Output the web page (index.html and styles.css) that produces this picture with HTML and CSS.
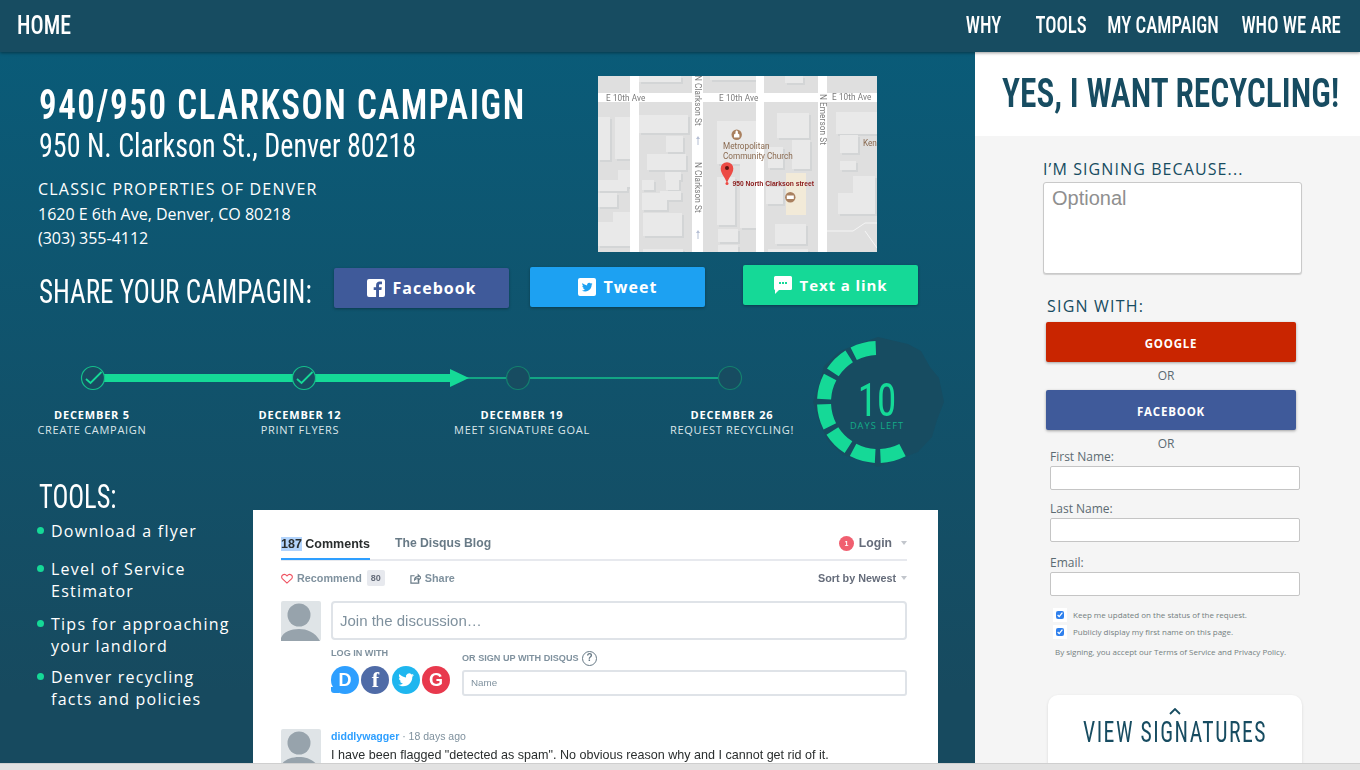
FILE: index.html
```html
<!DOCTYPE html>
<html lang="en">
<head>
<meta charset="utf-8">
<title>940/950 Clarkson Campaign</title>
<link rel="stylesheet" href="styles.css">
</head>
<body>
<header class="topbar">
  <a class="home">HOME</a>
  <nav class="nav">
    <a class="nav-why">WHY</a>
    <a class="nav-tools">TOOLS</a>
    <a class="nav-camp">MY CAMPAIGN</a>
    <a>WHO WE ARE</a>
  </nav>
</header>
<div class="page">
  <main class="left">
    <section class="hero">
      <div class="hero-text">
        <h1>940/950 CLARKSON CAMPAIGN</h1>
        <h2>950 N. Clarkson St., Denver 80218</h2>
        <p class="owner">CLASSIC PROPERTIES OF DENVER</p>
        <p class="addr">1620 E 6th Ave, Denver, CO 80218</p>
        <p class="addr">(303) 355-4112</p>
      </div>
      <svg class="map" viewBox="0 0 279 176" width="279" height="176">
        <defs>
          <g id="blds">
            <rect x="41" y="39" width="49" height="18"/><rect x="0" y="41" width="12" height="43"/><rect x="17" y="41" width="20" height="42"/><rect x="68" y="60" width="17" height="16"/><rect x="49" y="78" width="39" height="16"/><rect x="20" y="94" width="19" height="17"/><rect x="0" y="104" width="29" height="11"/><rect x="44" y="104" width="12" height="10"/><rect x="67" y="96" width="16" height="8"/><rect x="68" y="104" width="13" height="10"/><rect x="62" y="115" width="21" height="9"/><rect x="44" y="117" width="25" height="17"/><rect x="0" y="117" width="19" height="14"/><rect x="15" y="136" width="22" height="22"/><rect x="0" y="146" width="37" height="10"/><rect x="0" y="156" width="37" height="14"/><rect x="45" y="137" width="39" height="23"/><rect x="119" y="45" width="43" height="43"/><rect x="119" y="101" width="18" height="48"/><rect x="142" y="87" width="16" height="65"/><rect x="120" y="153" width="20" height="13"/><rect x="120" y="169" width="20" height="7"/><rect x="179" y="37" width="32" height="25"/><rect x="194" y="64" width="18" height="29"/><rect x="170" y="71" width="15" height="21"/><rect x="168" y="111" width="17" height="17"/><rect x="177" y="148" width="31" height="20"/><rect x="238" y="36" width="41" height="22"/><rect x="242" y="59" width="18" height="18"/><rect x="242" y="85" width="16" height="9"/><rect x="255" y="100" width="22" height="19"/><rect x="240" y="117" width="37" height="21"/><rect x="41" y="0" width="42" height="6"/><rect x="112" y="0" width="46" height="4"/><rect x="187" y="0" width="18" height="7"/><rect x="45" y="173" width="40" height="3"/><rect x="170" y="173" width="40" height="3"/>
          </g>
        </defs>
        <rect class="m-ground" width="279" height="176"/>
        <use href="#blds" x="2" y="2" class="m-shadow"/>
        <use href="#blds" class="m-bld"/>
        <rect class="m-tan" x="188" y="97" width="20" height="42"/>
        <path class="m-path" d="M229 155 L255 155 L267 147 L279 147 M267 155 L279 172"/>
        <rect class="m-road" x="0" y="17" width="279" height="9"/>
        <rect class="m-road" x="32" y="0" width="9" height="176"/>
        <rect class="m-road" x="94" y="0" width="11" height="176"/>
        <rect class="m-road" x="158" y="0" width="8" height="176"/>
        <rect class="m-road" x="220" y="0" width="9" height="176"/>
        <text class="m-lbl" x="8" y="25">E 10th Ave</text>
        <text class="m-lbl" x="121" y="25">E 10th Ave</text>
        <text class="m-lbl" x="234" y="24">E 10th Ave</text>
        <text class="m-lbl" transform="translate(97 -1) rotate(90)">N Clarkson St</text>
        <text class="m-lbl" transform="translate(97 86) rotate(90)">N Clarkson St</text>
        <text class="m-lbl" transform="translate(222 18) rotate(90)">N Emerson St</text>
        <path class="m-arrow" d="M99.500 69v-6h-1.500l2-3 2 3h-1.500v6zM99.500 163v-6h-1.500l2-3 2 3h-1.500v6z"/>
        <circle class="m-poi" cx="138.700" cy="58.700" r="5.200"/>
        <path class="m-poi-g" d="M136 61.500v-3l1.500-1v-2l1.200-1.200 1.200 1.200v2l1.500 1v3z"/>
        <circle class="m-poi" cx="192.300" cy="121.300" r="5.200"/>
        <rect class="m-poi-g" x="188.800" y="119.500" width="7" height="3.500"/>
        <text class="m-church" x="125" y="73">Metropolitan</text>
        <text class="m-church" x="125" y="83">Community Church</text>
        <text class="m-church" x="265" y="70">Ken</text>
        <path class="m-pin" d="M129 108c-.8-6-6.300-9.500-6.300-15.500a6.300 6.300 0 0 1 12.600 0c0 6-5.500 9.500-6.300 15.500z"/>
        <circle class="m-pin-dot" cx="129" cy="92" r="2"/>
        <circle class="m-pin" cx="129" cy="107.500" r="1.500"/>
        <text class="m-pin-lbl" x="134.500" y="110">950 North Clarkson street</text>
      </svg>
    </section>

    <section class="share">
      <h3 class="share-title">SHARE YOUR CAMPAGIN:</h3>
      <a class="btn btn-fb">
        <svg class="btn-ic" viewBox="0 0 18 18" width="18" height="18"><path class="ic-w" d="M2 0h14a2 2 0 0 1 2 2v14a2 2 0 0 1-2 2h-4v-7h2.400l.4-2.800H12V6.500c0-.8.300-1.300 1.400-1.300H15V2.700c-.3 0-1.200-.1-2.200-.1-2.200 0-3.700 1.300-3.700 3.700v1.900H6.700V11h2.400v7H2a2 2 0 0 1-2-2V2a2 2 0 0 1 2-2z"/></svg>
        Facebook
      </a>
      <a class="btn btn-tw">
        <svg class="btn-ic" viewBox="0 0 18 18" width="18" height="18"><path class="ic-w" fill-rule="evenodd" d="M2 0h14a2 2 0 0 1 2 2v14a2 2 0 0 1-2 2H2a2 2 0 0 1-2-2V2a2 2 0 0 1 2-2zM14.500 5.800c-.4.200-.8.300-1.200.3.400-.3.800-.7.900-1.200-.4.300-.9.400-1.400.5a2.200 2.200 0 0 0-3.700 2c-1.800-.1-3.400-1-4.500-2.300-.6 1-.3 2.200.7 2.900-.4 0-.7-.1-1-.3 0 1.100.8 2 1.800 2.200-.3.100-.7.100-1 0 .3.900 1.100 1.500 2.100 1.500-1 .8-2.200 1.100-3.300 1 1 .6 2.100 1 3.400 1 4.100 0 6.500-3.500 6.300-6.600.4-.3.700-.6.900-1z"/></svg>
        Tweet
      </a>
      <a class="btn btn-tx">
        <svg class="btn-ic" viewBox="0 0 18 18" width="18" height="18"><path class="ic-w" fill-rule="evenodd" d="M1.500 0h15A1.500 1.500 0 0 1 18 1.500v11a1.500 1.500 0 0 1-1.500 1.500H5l-4 4v-4h.5A1.500 1.500 0 0 1 0 12.500v-11A1.500 1.500 0 0 1 1.500 0zM5 6v2h2V6zm3 0v2h2V6zm3 0v2h2V6z"/></svg>
        Text a link
      </a>
    </section>

    <section class="progress">
      <div class="timeline">
        <svg class="track" viewBox="0 0 836 36" width="836" height="36">
          <line class="t-thin" x1="450" y1="18" x2="730" y2="18"/>
          <path class="t-thick" d="M93 14H450V9L469 18 450 27V22H93z"/>
          <circle class="t-node" cx="93" cy="18" r="11.500"/>
          <circle class="t-node" cx="304" cy="18" r="11.500"/>
          <circle class="t-node t-off" cx="518" cy="18" r="11.500"/>
          <circle class="t-node t-off" cx="730" cy="18" r="11.500"/>
          <path class="t-check" d="M86 19l4.500 4 11-11"/>
          <path class="t-check" d="M297 19l4.500 4 11-11"/>
        </svg>
        <div class="steps">
          <div class="step"><b>DECEMBER 5</b><span>CREATE CAMPAIGN</span></div>
          <div class="step"><b>DECEMBER 12</b><span>PRINT FLYERS</span></div>
          <div class="step"><b>DECEMBER 19</b><span>MEET SIGNATURE GOAL</span></div>
          <div class="step"><b>DECEMBER 26</b><span>REQUEST RECYCLING!</span></div>
        </div>
      </div>
      <div class="countdown">
        <svg class="cd-ring" viewBox="0 0 134 134" width="134" height="134">
          <polygon class="cd-bg" points="66,1 83,5 96,8 109,15 118,31 127,42 132,66 125,84 120,101 106,116 90,122 66,131 48,124 31,119 16,105 8,88 1,66 7,48 12,30 28,15 46,8"/>
          <circle class="cd-dash" cx="66" cy="66" r="54" transform="rotate(63 66 66)"/>
        </svg>
        <div class="cd-text"><strong>10</strong><span>DAYS LEFT</span></div>
      </div>
    </section>

    <section class="bottom">
      <aside class="tools">
        <h3 class="tools-title">TOOLS:</h3>
        <ul class="tools-list">
          <li>Download a flyer</li>
          <li>Level of Service Estimator</li>
          <li>Tips for approaching your landlord</li>
          <li>Denver recycling facts and policies</li>
        </ul>
      </aside>
      <div class="disqus">
        <div class="dq-tabs">
          <span class="dq-tab-on"><mark>187</mark> Comments</span>
          <span class="dq-tab">The Disqus Blog</span>
          <span class="dq-login">
            <span class="dq-badge">1</span>Login<i class="dq-caret"></i>
          </span>
        </div>
        <div class="dq-actions">
          <svg class="dq-heart" viewBox="0 0 14 12" width="12" height="11"><path d="M7 11.300 1.500 6.200C-1 3 3.500-1 7 3c3.500-4 8 0 5.500 3.200z"/></svg>
          <span>Recommend</span><span class="dq-count">80</span>
          <svg class="dq-share" viewBox="0 0 12 12" width="11" height="11"><path d="M9.500 7.500V11H1V3h4M5 7.500C5 5 7 4 9 4V2l3 3-3 3V6C7.500 6 6 6.500 5 7.500z"/></svg>
          <span>Share</span>
          <span class="dq-sort">Sort by Newest<i class="dq-caret"></i></span>
        </div>
        <div class="dq-post">
          <svg class="dq-ava" viewBox="0 0 40 40" width="40" height="40"><rect class="ava-bg" width="40" height="40" rx="2"/><circle class="ava-fg" cx="18" cy="14" r="11.500"/><path class="ava-fg" d="M0 40v-3c2-6 10-9 18-9s16 3 21 12z"/></svg>
          <div class="dq-input">Join the discussion…</div>
        </div>
        <div class="dq-auth">
          <div class="dq-login-with">
            <div class="dq-small">LOG IN WITH</div>
            <div class="dq-socials">
              <span class="soc soc-d">D</span>
              <span class="soc soc-f">f</span>
              <span class="soc soc-t"><svg viewBox="0 0 18 18" width="18" height="18"><path class="ic-w" d="M17 4c-.6.300-1.200.4-1.900.5.700-.4 1.200-1 1.400-1.800-.6.400-1.300.6-2 .8a3.200 3.200 0 0 0-5.500 2.900C6.300 6.300 4 5 2.400 3.100c-.9 1.500-.4 3.300 1 4.300-.5 0-1-.2-1.500-.4 0 1.600 1.100 2.900 2.600 3.200-.5.100-1 .1-1.500 0 .4 1.300 1.600 2.200 3 2.200-1.400 1.100-3.100 1.600-4.800 1.400 1.500.9 3.100 1.500 4.900 1.500 6 0 9.400-5 9.200-9.500.6-.5 1.200-1.100 1.700-1.800z"/></svg></span>
              <span class="soc soc-g">G</span>
            </div>
          </div>
          <div class="dq-signup">
            <div class="dq-small dq-small-q">OR SIGN UP WITH DISQUS <span class="dq-q">?</span></div>
            <div class="dq-name">Name</div>
          </div>
        </div>
        <div class="dq-comment">
          <svg class="dq-ava" viewBox="0 0 40 40" width="40" height="40"><rect class="ava-bg" width="40" height="40" rx="2"/><circle class="ava-fg" cx="18" cy="14" r="11.500"/><path class="ava-fg" d="M0 40v-3c2-6 10-9 18-9s16 3 21 12z"/></svg>
          <div class="dq-body">
            <div class="dq-meta"><b>diddlywagger</b> · 18 days ago</div>
            <div class="dq-msg">I have been flagged "detected as spam". No obvious reason why and I cannot get rid of it.</div>
          </div>
        </div>
      </div>
    </section>
  </main>

  <aside class="right">
    <div class="yes"><h2>YES, I WANT RECYCLING!</h2></div>
    <form class="sign">
      <label class="because">I’M SIGNING BECAUSE...</label>
      <textarea class="reason" placeholder="Optional"></textarea>
      <h4 class="signwith">SIGN WITH:</h4>
      <a class="sbtn sbtn-g">GOOGLE</a>
      <div class="or">OR</div>
      <a class="sbtn sbtn-f">FACEBOOK</a>
      <div class="or or-2">OR</div>
      <label class="fld fld-1">First Name:</label>
      <input class="inp" type="text">
      <label class="fld">Last Name:</label>
      <input class="inp" type="text">
      <label class="fld fld-3">Email:</label>
      <input class="inp" type="text">
      <label class="chk chk-1"><input type="checkbox" checked>Keep me updated on the status of the request.</label>
      <label class="chk chk-2"><input type="checkbox" checked>Publicly display my first name on this page.</label>
      <p class="terms">By signing, you accept our Terms of Service and Privacy Policy.</p>
      <div class="view">
        <svg class="view-caret" viewBox="0 0 12 7" width="12" height="7"><path d="M1 6l5-5 5 5"/></svg>
        <div class="view-txt">VIEW SIGNATURES</div>
      </div>
    </form>
  </aside>
</div>
<div class="scrollbar"></div>
</body>
</html>
```

FILE: styles.css
```css
* { box-sizing: border-box; }
html, body { margin: 0; height: 770px; overflow: hidden; }
body {
  display: flex; flex-direction: column; width: 1360px;
  font-family: "Open Sans", sans-serif; background: #e2e2e2;
}
h1, h2, h3, h4, p { margin: 0; font-weight: 400; }

/* top bar */
.topbar {
  height: 52px; flex: none; display: flex; justify-content: space-between; align-items: center;
  background: #174c61; color: #fff; padding: 0 19px 2px 17px;
  box-shadow: 0 1px 3px rgba(0,0,0,.4); position: relative; z-index: 2;
  font-family: "Roboto", sans-serif; font-stretch: 75%; font-weight: 500;
}
.home { font-size: 26px; transform: scaleX(.84); transform-origin: left center; }
.nav { display: flex; font-size: 24px; gap: 29px; transform: scaleX(.78); transform-origin: right center; }
.nav-why { margin-right: 15px; }
.nav-tools { margin-right: -2.500px; }

.page { flex: 1; display: flex; min-height: 0; border-bottom: 1px solid #cfcfcf; }

/* left */
.left {
  width: 975px; flex: none; overflow: hidden; color: #fff;
  background: linear-gradient(#0a5b78, #174a5f 90%);
}
.hero { display: flex; padding: 24px 0 0 39px; height: 200px; }
.hero-text { width: 559px; padding-top: 7px; }
h1 {
  font-family: "Roboto", sans-serif; font-stretch: 75%;
  font-size: 42px; font-weight: 600; letter-spacing: 1.900px; line-height: 44px; white-space: nowrap;
  transform: scaleX(.833); transform-origin: left center;
}
.hero-text h2 {
  font-family: "Roboto", sans-serif; font-stretch: 75%; font-weight: 400;
  font-size: 33px; line-height: 38px; white-space: nowrap;
  transform: scaleX(.85); transform-origin: left center;
}
.owner { font-size: 16px; letter-spacing: 1.200px; margin: 12px 0 0 -1px; line-height: 24px; }
.addr { font-size: 16px; line-height: 24px; margin-left: -1px; position: relative; top: 1px; }
.map { display: block; flex: none; filter: blur(.3px); }
.m-ground { fill: #dfdfdf; }
.m-shadow { fill: #d3d5d6; }
.m-bld { fill: #e9e9e9; }
.m-tan { fill: #f2ead8; }
.m-road { fill: #fff; }
.m-path { fill: none; stroke: #f5f5f5; stroke-width: 1; }
.m-lbl { font: 8.200px "Roboto", sans-serif; fill: #7b7b7b; letter-spacing: .1px; }
.m-arrow { fill: #b6bfd4; }
.m-poi { fill: #a9805f; }
.m-poi-g { fill: #fff; }
.m-church { font: 8.200px "Roboto", sans-serif; fill: #8a6a50; }
.m-pin { fill: #ec4b45; }
.m-pin-dot { fill: #5d1512; }
.m-pin-lbl { font: 700 6.700px "Liberation Sans", sans-serif; fill: #8a1a1a; }

/* share */
.share { display: flex; align-items: flex-start; padding: 13px 0 0 39px; height: 71px; }
.share-title {
  font-family: "Roboto", sans-serif; font-stretch: 75%; font-weight: 400;
  font-size: 33px; line-height: 38px; margin-top: 8px; width: 295px; flex: none; white-space: nowrap;
  transform: scaleX(.821); transform-origin: left center;
}
.btn {
  display: flex; align-items: center; justify-content: center; gap: 8px; flex: none;
  height: 40px; width: 175px; border-radius: 2px; font-size: 16px; font-weight: 700; letter-spacing: 1px;
  box-shadow: 0 1px 3px rgba(0,0,0,.3); color: #fff;
}
.ic-w { fill: #fff; }
.btn-ic { flex: none; }
.btn-fb { background: #3f5a9a; margin-top: 3px; }
.btn-tw { background: #1da1f2; margin: 2px 0 0 21px; }
.btn-tx { background: #15d997; margin-left: 38px; font-size: 15px; letter-spacing: .9px; }

/* progress */
.progress { display: flex; height: 157px; padding-top: 21px; }
.timeline { width: 836px; flex: none; padding-top: 16px; }
.track { display: block; }
.t-thin { stroke: #15c08c; stroke-width: 1.500; }
.t-thick { fill: #15d997; }
.t-node { fill: #174c61; stroke: #15c08c; stroke-width: 1.200; }
.t-off { stroke: #14806f; }
.t-check { fill: none; stroke: #15d997; stroke-width: 1.800; }
.steps { display: grid; grid-template-columns: 184px 232px 212px 208px; margin-top: 11px; text-align: center; }
.step b, .step span { display: block; white-space: nowrap; }
.step b { font-size: 11px; font-weight: 700; letter-spacing: .8px; line-height: 15px; }
.step span { font-size: 11px; letter-spacing: .7px; line-height: 15px; color: #dbe6ea; }
.countdown { position: relative; width: 134px; height: 134px; margin: -8px 0 0 -24px; flex: none; }
.cd-ring { display: block; }
.cd-bg { fill: #174c61; }
.cd-dash {
  fill: none; stroke: #15d997; stroke-width: 14;
  stroke-dasharray: 23 5.270 23 5.270 23 5.270 23 5.270 23 5.270 23 5.270 23 400;
}
.cd-text {
  position: absolute; left: 0; top: 46px; width: 130px; text-align: center; color: #15d997;
}
.cd-text strong {
  display: block; font-family: "Roboto", sans-serif; font-stretch: 75%;
  font-size: 46px; font-weight: 400; line-height: 36px; transform: scaleX(.85);
}
.cd-text span { display: block; font-size: 9.200px; letter-spacing: 1.050px; line-height: 12px; color: #14ad88; margin-top: 2px; }

/* bottom */
.bottom { display: flex; height: 283px; }
.tools { width: 253px; flex: none; padding: 0 0 0 39px; }
.tools-title {
  font-family: "Roboto", sans-serif; font-stretch: 75%; font-weight: 400;
  font-size: 33px; line-height: 36px; margin-top: -1px;
  transform: scaleX(.8); transform-origin: left center;
}
.tools-list { list-style: none; margin: 5px 0 0; padding: 0 0 0 12px; }
.tools-list li {
  position: relative; font-size: 16px; letter-spacing: 1.250px; line-height: 22px; width: 182px; margin-bottom: 11px;
}
.tools-list li:first-child { margin-bottom: 16px; }
.tools-list li:nth-child(3) { margin-bottom: 9px; }
.tools-list li::before {
  content: ""; position: absolute; left: -14px; top: 7px; width: 7px; height: 7px; border-radius: 50%; background: #15d997;
}
.disqus {
  width: 685px; height: 253px; margin-top: 30px; background: #fff; padding: 0 31px 0 28px; overflow: hidden;
  font-family: "Liberation Sans", sans-serif; color: #656c7a; filter: blur(.3px);
}
.dq-tabs {
  display: flex; align-items: center; height: 51px; padding-top: 17px; border-bottom: 2px solid #e7e9ee;
  font-size: 12.500px; font-weight: 700; position: relative;
}
.dq-tab-on { color: #2a2e2e; width: 114px; position: relative; height: 32px; line-height: 32px; margin-top: 1px; }
.dq-tab-on::after { content: ""; position: absolute; left: 0; bottom: 0; width: 89px; height: 2px; background: #2e9fff; }
mark { background: #b3d4fc; color: inherit; }
.dq-tab { color: #687a86; font-size: 12.200px; }
.dq-login { margin-left: auto; display: flex; align-items: center; font-size: 12.200px; color: #656c7a; }
.dq-badge {
  width: 15px; height: 15px; border-radius: 50%; background: #f05f70; color: #fff; font-size: 7px; text-align: center;
  line-height: 15px; margin-right: 5px;
}
.dq-caret {
  display: inline-block; margin-left: 9px; border: 3.500px solid transparent; border-top: 4px solid #c2c6cc; border-bottom: 0;
}
.dq-actions {
  display: flex; align-items: center; height: 34px; font-size: 10.800px; font-weight: 700; color: #7f919e; margin-top: 0;
}
.dq-heart { fill: none; stroke: #ef5261; stroke-width: 1.300; margin-right: 4px; }
.dq-count { background: #e7e9ee; font-size: 9px; padding: 3px 4px; border-radius: 2px; margin: 0 0 0 5px; color: #656c7a; }
.dq-share { fill: none; stroke: #687a86; stroke-width: 1.300; margin: 0 4px 0 25px; }
.dq-sort { margin-left: auto; color: #656c7a; font-size: 10.800px; display: flex; align-items: center; }
.dq-sort .dq-caret { margin-left: 5px; }
.dq-post { display: flex; gap: 10px; margin-top: 6px; }
.dq-ava { display: block; flex: none; }
.ava-bg { fill: #dfe4e7; }
.ava-fg { fill: #97a3ac; }
.dq-input {
  flex: 1; height: 39px; border: 2px solid #dfe3e8; border-radius: 4px; padding-left: 7px; font-size: 15px; line-height: 35px; color: #7f919e;
}
.dq-auth { display: flex; margin-left: 50px; margin-top: 7px; }
.dq-login-with { width: 131px; }
.dq-small { font-size: 9.100px; font-weight: 700; color: #7f919e; line-height: 11px; }
.dq-socials { display: flex; gap: 2.300px; margin-top: 7px; }
.soc {
  width: 28px; height: 28px; border-radius: 50%; color: #fff; font-weight: 700; font-size: 18px; line-height: 28px; text-align: center;
  display: flex; align-items: center; justify-content: center; position: relative;
}
.soc-d { background: #2e9fff; }
.soc-d::after { content: ""; position: absolute; left: 0; bottom: 1px; width: 8px; height: 6px; background: #2e9fff; border-radius: 0 0 0 3px; z-index: -1; }
.soc-f { background: #4f6ba7; font-family: "Liberation Serif", serif; font-size: 22px; }
.soc-t { background: #1fb6ef; }
.soc-g { background: #e8394d; }
.dq-signup { flex: 1; padding-top: 3px; }
.dq-small-q { display: flex; align-items: center; white-space: pre; height: 15px; }
.dq-q {
  width: 15px; height: 15px; border: 1.500px solid #687a86; border-radius: 50%; font-size: 10px; line-height: 12px; text-align: center; margin-left: 1px; color: #687a86;
}
.dq-name {
  height: 26px; border: 2px solid #dfe3e8; border-radius: 3px; margin-top: 4px; padding-left: 7px; font-size: 9.800px; line-height: 22px; color: #7f919e;
}
.dq-comment { display: flex; gap: 10px; margin-top: 33px; }
.dq-meta { font-size: 10.500px; color: #7f919e; line-height: 14px; }
.dq-meta b { color: #2e9fff; font-size: 10.600px; }
.dq-msg { font-size: 12.570px; color: #2a2e2e; line-height: 17px; margin-top: 4px; white-space: nowrap; }

/* right */
.right { width: 385px; flex: none; overflow: hidden; background: #f5f5f5; display: flex; flex-direction: column; }
.yes { height: 84px; flex: none; background: #fff; display: flex; align-items: center; padding: 0 0 2px 27px; }
.yes h2 {
  font-family: "Roboto", sans-serif; font-stretch: 75%;
  font-size: 41px; font-weight: 600; color: #174c61; white-space: nowrap; line-height: 50px;
  transform: scaleX(.815); transform-origin: left center;
}
.sign { display: flex; flex-direction: column; align-items: flex-start; padding: 0 0 0 68px; position: relative; flex: 1; }
.because { font-size: 16px; font-weight: 500; letter-spacing: 1.100px; color: #174c61; margin-top: 22px; line-height: 22px; }
.reason {
  width: 259px; height: 92px; margin: 2px 0 0; padding: 4px 8px; border: 1px solid #c9c9c9; border-radius: 3px; background: #fff;
  font: 20px "Liberation Sans", sans-serif; resize: none; box-shadow: 0 1px 1px rgba(0,0,0,.15);
}
.reason::placeholder { color: #8f8f8f; }
.signwith { font-size: 16px; font-weight: 500; letter-spacing: 1.200px; color: #174c61; margin: 21px 0 0 4px; line-height: 22px; }
.sbtn {
  display: block; width: 250px; height: 40px; margin: 5px 0 0 3px; border-radius: 2px; color: #fff; font-size: 11.500px; font-weight: 700; letter-spacing: .8px;
  text-align: center; line-height: 43px; box-shadow: 0 1px 3px rgba(0,0,0,.35); flex: none;
}
.sbtn-g { background: #c92500; }
.sbtn-f { background: #3f5a9a; margin-top: 0; }
.or { width: 250px; margin-left: 3px; text-align: center; font-size: 12px; color: #5c6b72; line-height: 16px; margin-top: 6px; height: 22px; padding-right: 10px; }
.or-2 { margin-top: 6px; height: 16px; }
.fld { font-size: 12px; color: #5c6b72; line-height: 16px; margin: 3px 0 0 7px; }
.fld-1 { margin-top: -3px; }
.inp {
  width: 250px; height: 24px; margin: 1px 0 0 7px; border: 1px solid #c5c5c5; border-radius: 2px; background: #fff; flex: none; padding: 0;
}
.inp + .fld { margin-top: 11px; }
.inp + .fld-3 { margin-top: 13px; }
.chk { display: flex; align-items: center; font-size: 8px; color: #74807f; line-height: 12px; margin-left: 13px; height: 17px; white-space: nowrap; }
.chk input { width: 8px; height: 8px; margin: 0 9px 0 0; accent-color: #2f80ed; flex: none; box-shadow: 0 0 0 3px #fff; }
.chk-1 { margin-top: 10px; }
.terms { font-size: 8px; color: #74807f; line-height: 12px; margin: 6px 0 0 12px; white-space: nowrap; }
.view {
  width: 254px; height: 90px; margin: 37px 0 0 5px; background: #fff; border-radius: 10px 10px 0 0; text-align: center; flex: none;
  box-shadow: 0 1px 3px rgba(0,0,0,.12); padding-top: 13px; position: relative;
}
.view-caret { display: block; margin: 0 auto; fill: none; stroke: #174c61; stroke-width: 1.800; }
.view-txt {
  font-family: "Roboto", sans-serif; font-stretch: 75%;
  font-size: 29px; color: #174c61; letter-spacing: 2px; line-height: 28px; margin-top: 3px; white-space: nowrap;
  transform: scaleX(.75);
}

.scrollbar { height: 6px; flex: none; background: #e2e2e2; }
```
